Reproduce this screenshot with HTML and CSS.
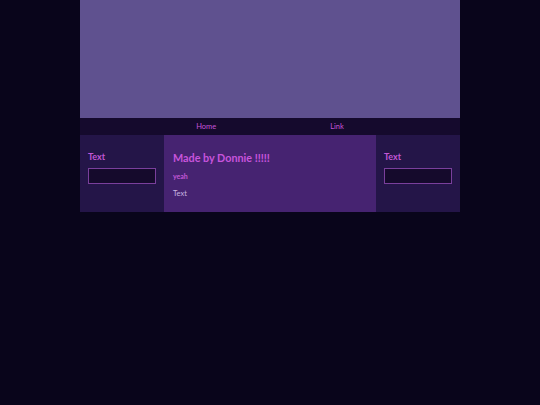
FILE: index.html
```html
<!DOCTYPE html>
<html>
<head>
<meta charset="utf-8">
<link rel="stylesheet" href="styles.css">
</head>
<body>
<div class="page">
  <header class="banner"></header>
  <nav class="nav">
    <a class="nav-link" href="#">Home</a>
    <a class="nav-link" href="#">Link</a>
  </nav>
  <main class="columns">
    <aside class="side">
      <h3 class="side-title">Text</h3>
      <input class="side-input" type="text">
    </aside>
    <section class="center">
      <h1 class="center-title">Made by Donnie !!!!!</h1>
      <p class="center-yeah">yeah</p>
      <p class="center-text">Text</p>
    </section>
    <aside class="side">
      <h3 class="side-title">Text</h3>
      <input class="side-input" type="text">
    </aside>
  </main>
</div>
</body>
</html>
```
FILE: styles.css
```css
html, body {
  margin: 0;
  padding: 0;
  background: #09051b;
  font-family: "Lato", "Open Sans", sans-serif;
}
.page {
  width: 380px;
  margin: 0 auto;
}
.banner {
  height: 118px;
  background: #5f518f;
}
.nav {
  height: 17px;
  background: #150a2d;
  display: flex;
  justify-content: center;
  align-items: center;
  gap: 114px;
}
.nav-link {
  color: #c455d8;
  font-size: 7.5px;
  text-decoration: none;
  padding-left: 0;
}
.columns {
  display: grid;
  grid-template-columns: 84px 212px 84px;
  height: 77px;
}
.side {
  background: #241548;
  padding: 16px 8px 0 8px;
}
.side-title {
  margin: 0;
  color: #c257d6;
  font-size: 9px;
  font-weight: 700;
  line-height: 12px;
}
.side-input {
  display: block;
  box-sizing: border-box;
  width: 68px;
  height: 16px;
  margin: 5px 0 0 0;
  padding: 0;
  background: #150a2c;
  border: 1px solid #7a3f9c;
}
.center {
  background: #462371;
  padding: 16px 9px 0 9px;
}
.center-title {
  margin: 0;
  color: #c854dc;
  font-size: 10.8px;
  font-weight: 700;
  line-height: 14px;
}
.center-yeah {
  margin: 6px 0 0 0;
  color: #c257d6;
  font-size: 7px;
  font-weight: 700;
  line-height: 10px;
}
.center-text {
  margin: 8px 0 0 0;
  color: #c8b6e0;
  font-size: 7.5px;
  line-height: 10px;
}
```
